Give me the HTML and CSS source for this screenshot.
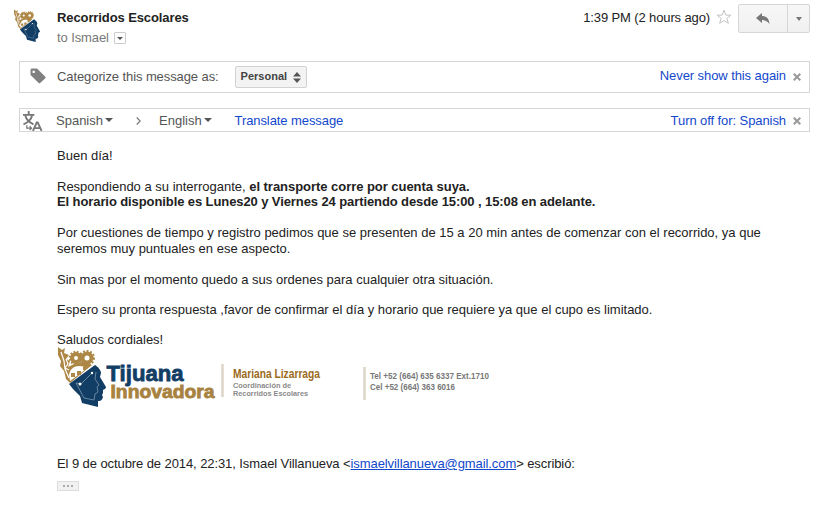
FILE: index.html
```html
<!DOCTYPE html>
<html lang="es">
<head>
<meta charset="utf-8">
<title>Recorridos Escolares</title>
<link rel="stylesheet" href="styles.css">
</head>
<body>
<svg class="defs" width="0" height="0" aria-hidden="true">
  <symbol id="head" viewBox="0 0 50 61">
    <path fill="#ad8746" d="M1 1l4 3 3-2-1 5 5 2-3 4 4 2-2 6 6-3 10-2 8 3-22 18-4-4-2-8-4-5 1-5-3-6z"/>
    <path d="M4 6l3 9 1 8 4 9M9 13l2 5-3 4 4 2" fill="none" stroke="#fff" stroke-width="1.2"/>
    <path fill="#fff" d="M12 29c1-6 5-9 10-9 4 0 6 1 7 3l-16 12z"/>
    <path fill="#ad8746" d="M14 27h4v4h-4zM20 25h4v4h-4zM26 21h3v3h-3z"/>
    <g fill="#fff" stroke="#ad8746">
      <circle cx="19" cy="12" r="4" stroke-width="4"/>
      <circle cx="19" cy="12" r="6.300" fill="none" stroke-width="2" stroke-dasharray="1.700 1.600"/>
      <circle cx="30" cy="12" r="4.500" stroke-width="4"/>
      <circle cx="30" cy="12" r="7" fill="none" stroke-width="2" stroke-dasharray="1.900 1.700"/>
    </g>
    <path fill="#123e66" d="M12 38L38 19c3 2 6 5 6 8l-1 4 6 10c0 2-2 2-3 3v3l-1 2 1 2c-1 4-3 4-5 4v6l-16-4-2-7-7-7z"/>
    <path d="M36 26L24 38l-5-1 8 15 10 2 1-6 3-2-1-5 2-2-4-6 1-7" fill="none" stroke="#6f8ca5" stroke-width=".9"/>
    <circle cx="23" cy="38" r="1.500" fill="#fff"/><circle cx="35" cy="27" r="1.200" fill="#fff"/>
  </symbol>
  <symbol id="close" viewBox="0 0 8 8"><path d="M.7.700l6.600 6.600M7.300.700L.7 7.300" stroke="#999" stroke-width="2"/></symbol>
</svg>
<header class="header">
  <svg class="avatar" viewBox="0 0 28 33"><use href="#head" width="28" height="33"/></svg>
  <div class="sender">
    <div class="name">Recorridos Escolares</div>
    <div class="to">to Ismael <span class="details"><i class="caret small"></i></span></div>
  </div>
  <div class="date">1:39 PM (2 hours ago)</div>
  <svg class="star" viewBox="0 0 16 16"><path d="M8 1.200l1.800 4.900 5.200.1-4.100 3.200 1.500 5L8 11.500l-4.400 2.900 1.500-5L1 6.200l5.200-.1z" fill="#fff" stroke="#c4c4c4"/></svg>
  <div class="actions">
    <div class="reply"><svg width="14" height="12" viewBox="0 0 14 12"><path d="M0 5L6 0v3c4 0 7 2 7.500 8C11 8 9 7 6 7v3z" fill="#777"/></svg></div>
    <div class="more"><i class="caret"></i></div>
  </div>
</header>
<section class="bar categorize">
  <svg class="tag" viewBox="0 0 16 16"><path fill="#808080" fill-rule="evenodd" d="M1.500.5H7l8.300 8.200c.5.500.5 1 0 1.500L10.200 15c-.5.500-1 .5-1.500 0L.5 7V1.500zM3.700 2.500a1.300 1.300 0 1 0 .01 0z"/></svg>
  <span class="label">Categorize this message as:</span>
  <span class="select">Personal<svg width="8" height="11" viewBox="0 0 8 11"><path d="M0 4.500L4 0l4 4.500zM0 6.500h8L4 11z" fill="#555"/></svg></span>
  <a class="end">Never show this again</a>
  <svg class="close"><use href="#close"/></svg>
</section>
<section class="bar translate">
  <svg class="lang" viewBox="0 0 20 21"><g fill="none" stroke="#777" stroke-width="2"><path d="M0 4h12M6 0v4M2.500 5c1 4 4 7 8.500 9M9.500 5c-1 4-4 7-9 9"/><path d="M4 15v3h4M7 16l2 2-2 2" stroke-width="1.300"/><path d="M10.500 21l4-9h1l4 9M12 18h6"/></g></svg>
  <span class="from">Spanish<i class="caret"></i></span>
  <svg class="chevron" viewBox="0 0 5 8"><path d="M.7.500L4.200 4 .7 7.500" fill="none" stroke="#777" stroke-width="1.100"/></svg>
  <span class="into">English<i class="caret"></i></span>
  <a class="translate-link">Translate message</a>
  <a class="end">Turn off for: Spanish</a>
  <svg class="close"><use href="#close"/></svg>
</section>
<main class="message">
  <p>Buen día!</p>
  <p>Respondiendo a su interrogante, <b>el transporte corre por cuenta suya.<br><span class="schedule">El horario disponible es Lunes20 y Viernes 24 partiendo desde 15:00 , 15:08 en adelante.</span></b></p>
  <p class="request">Por cuestiones de tiempo y registro pedimos que se presenten de 15 a 20 min antes de comenzar con el recorrido, ya que<br>seremos muy puntuales en ese aspecto.</p>
  <p class="tight">Sin mas por el momento quedo a sus ordenes para cualquier otra situación.</p>
  <p class="tight">Espero su pronta respuesta ,favor de confirmar el día y horario que requiere ya que el cupo es limitado.</p>
  <p class="bye">Saludos cordiales!</p>
  <svg class="signature" width="440" height="66" viewBox="57 346 440 66">
    <use href="#head" x="57" y="346" width="50" height="61"/>
    <g class="brand">
      <text class="tijuana" x="106.500" y="380.500" textLength="77" lengthAdjust="spacingAndGlyphs">Tijuana</text>
      <text class="innovadora" x="110.500" y="397.500" textLength="104" lengthAdjust="spacingAndGlyphs">Innovadora</text>
    </g>
    <path d="M222.500 364v33M364.500 367v33" stroke="#ddd6c8" stroke-width="2.500"/>
    <g class="contact">
      <text class="person" x="233" y="378" textLength="87" lengthAdjust="spacingAndGlyphs">Mariana Lizarraga</text>
      <text class="role" x="233" y="388" textLength="58" lengthAdjust="spacingAndGlyphs">Coordinación de</text>
      <text class="role" x="233" y="396" textLength="75" lengthAdjust="spacingAndGlyphs">Recorridos Escolares</text>
      <text class="phone" x="370" y="379" textLength="119" lengthAdjust="spacingAndGlyphs">Tel +52 (664) 635 6337 Ext.1710</text>
      <text class="phone" x="370" y="390" textLength="85" lengthAdjust="spacingAndGlyphs">Cel +52 (664) 363 6016</text>
    </g>
  </svg>
  <p class="quote">El 9 de octubre de 2014, 22:31, Ismael Villanueva &lt;<a>ismaelvillanueva@gmail.com</a>&gt; escribió:</p>
  <div class="ellipsis"><i></i><i></i><i></i></div>
</main>
</body>
</html>
```
FILE: styles.css
```css
* { box-sizing: border-box; }
body { margin: 0; background: #fff; color: #222; font: 13px/15.4px "Liberation Sans", Arial, sans-serif; }
svg { display: block; flex: none; overflow: visible; }
.defs { position: absolute; }
.header { display: flex; height: 61px; padding-right: 13px; }
.avatar { width: 28px; height: 33px; margin: 9px 0 0 13px; }
.sender { margin: 10px 0 0 16px; }
.name { font-weight: bold; letter-spacing: -.1px; }
.to { display: flex; align-items: center; margin-top: 5px; color: #777; letter-spacing: -.1px; }
.details { display: flex; align-items: center; justify-content: center; width: 12px; height: 12px; margin-left: 5px; border: 1px solid #ccc; border-radius: 1px; }
.caret { display: inline-block; border: 4px solid transparent; border-top-color: #555; border-bottom: 0; }
.caret.small { border-width: 3px 3px 0; }
.date { margin: 10px 6px 0 auto; letter-spacing: -.12px; }
.star { width: 16px; height: 16px; margin-top: 9px; }
.actions { display: flex; width: 72px; height: 29px; margin: 4px 0 0 6px; border: 1px solid #d6d6d6; border-radius: 2px; background: linear-gradient(#f7f7f7, #f0f0f0); }
.reply, .more { display: flex; align-items: center; justify-content: center; }
.reply { width: 49px; border-right: 1px solid #d6d6d6; }
.more { flex: 1; }
.more .caret { border-width: 4px 3.5px 0; border-top-color: #777; }
.bar { display: flex; align-items: center; margin: 0 13px 15px 19px; border: 1px solid #d6d6d6; color: #555; }
.categorize { height: 32px; }
.translate { height: 24px; margin-bottom: 0; padding-top: 1px; }
.tag { width: 16px; height: 16px; margin: 0 11px 3px 10px; }
.label { letter-spacing: -.09px; }
.select { display: flex; align-items: center; justify-content: space-between; width: 72px; height: 22px; margin-left: 16px; padding: 0 5px; border: 1px solid #d2d2d2; border-radius: 2px; background: #f3f3f3; color: #444; font-size: 11px; font-weight: bold; }
a { color: #1148cc; }
.end { margin: 0 7px 0 auto; letter-spacing: -.08px; }
.categorize .end { padding-bottom: 2px; }
.close { width: 8px; height: 8px; margin-right: 8px; }
.lang { width: 19px; height: 20px; margin: 1px 14px 0 3px; }
.from { width: 80px; }
.from .caret, .into .caret { margin: 0 0 3px 2px; }
.chevron { width: 5px; height: 8px; margin-right: 18px; }
.into { width: 75.5px; }
.translate-link { letter-spacing: -.08px; }
.message { padding: 16px 20px 0 57px; line-height: 15px; white-space: nowrap; }
.message p { margin: 0 0 16px; }
.message p.request { margin-bottom: 15px; line-height: 16px; }
.message p.tight { margin-bottom: 15px; }
.message b { letter-spacing: -.04px; }
.message .schedule { letter-spacing: -.095px; }
.message p.bye { margin: 0; }
.signature { margin-top: -1px; }
.brand { font-weight: bold; }
.tijuana { font-size: 22px; fill: #123e66; stroke: #123e66; stroke-width: .8px; }
.innovadora { font-size: 18px; fill: #a8823f; stroke: #a8823f; stroke-width: .8px; }
.contact { font-weight: bold; fill: #777; }
.person { font-size: 12px; fill: #9a6a1c; }
.role { font-size: 8px; fill: #8a8a8a; }
.phone { font-size: 9.5px; }
.message .quote { margin: 44px 0 10px; letter-spacing: -.085px; }
.quote a { text-decoration: underline; }
.ellipsis { display: flex; align-items: center; justify-content: center; gap: 2px; width: 22px; height: 10px; border: 1px solid #ddd; background: #f1f1f1; }
.ellipsis i { width: 2px; height: 2px; background: #aaa; }
```
